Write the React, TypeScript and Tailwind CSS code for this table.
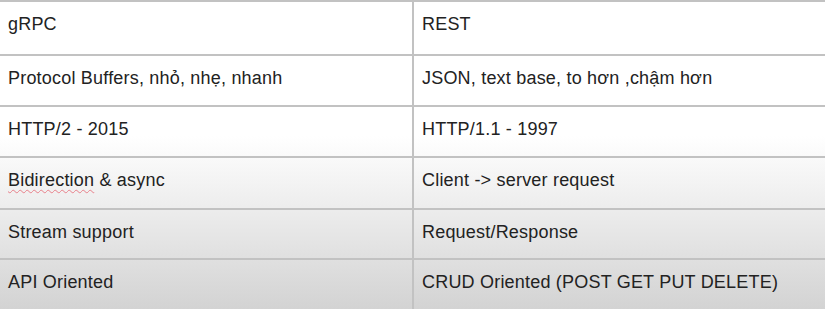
const ROWS = [
  { left: 'gRPC', right: 'REST', h: 'h-[54px]' },
  { left: 'Protocol Buffers, nhỏ, nhẹ, nhanh', right: 'JSON, text base, to hơn ,chậm hơn', h: 'h-[51px]' },
  { left: 'HTTP/2 - 2015', right: 'HTTP/1.1 - 1997', h: 'h-[51px]' },
  { left: 'Bidirection & async', right: 'Client -> server request', h: 'h-[52px]', wavy: true },
  { left: 'Stream support', right: 'Request/Response', h: 'h-[50px]' },
  { left: 'API Oriented', right: 'CRUD Oriented (POST GET PUT DELETE)', h: 'h-[51px]' },
];

export default function App() {
  return (
    <div className="h-[309px] w-[825px] overflow-hidden bg-[linear-gradient(to_bottom,#ffffff_0%,#ffffff_44%,#d3d3d3_100%)] font-['Liberation_Sans',Arial,sans-serif] text-[18px] tracking-[0.2px] text-[#222]">
      {ROWS.map((row) => {
        const first = row.wavy ? (
          <>
            <span className="underline decoration-wavy decoration-[#e8808a] decoration-1 underline-offset-[3px]">
              Bidirection
            </span>{' '}
            &amp; async
          </>
        ) : (
          row.left
        );
        return (
          <div key={row.left} className={`flex border-t-2 border-[#c2c2c2] ${row.h}`}>
            <div className="w-[412px] pl-[8px] pt-[9px]">{first}</div>
            <div className="flex-1 border-l-2 border-[#c2c2c2] pl-[8px] pt-[9px]">{row.right}</div>
          </div>
        );
      })}
    </div>
  );
}
